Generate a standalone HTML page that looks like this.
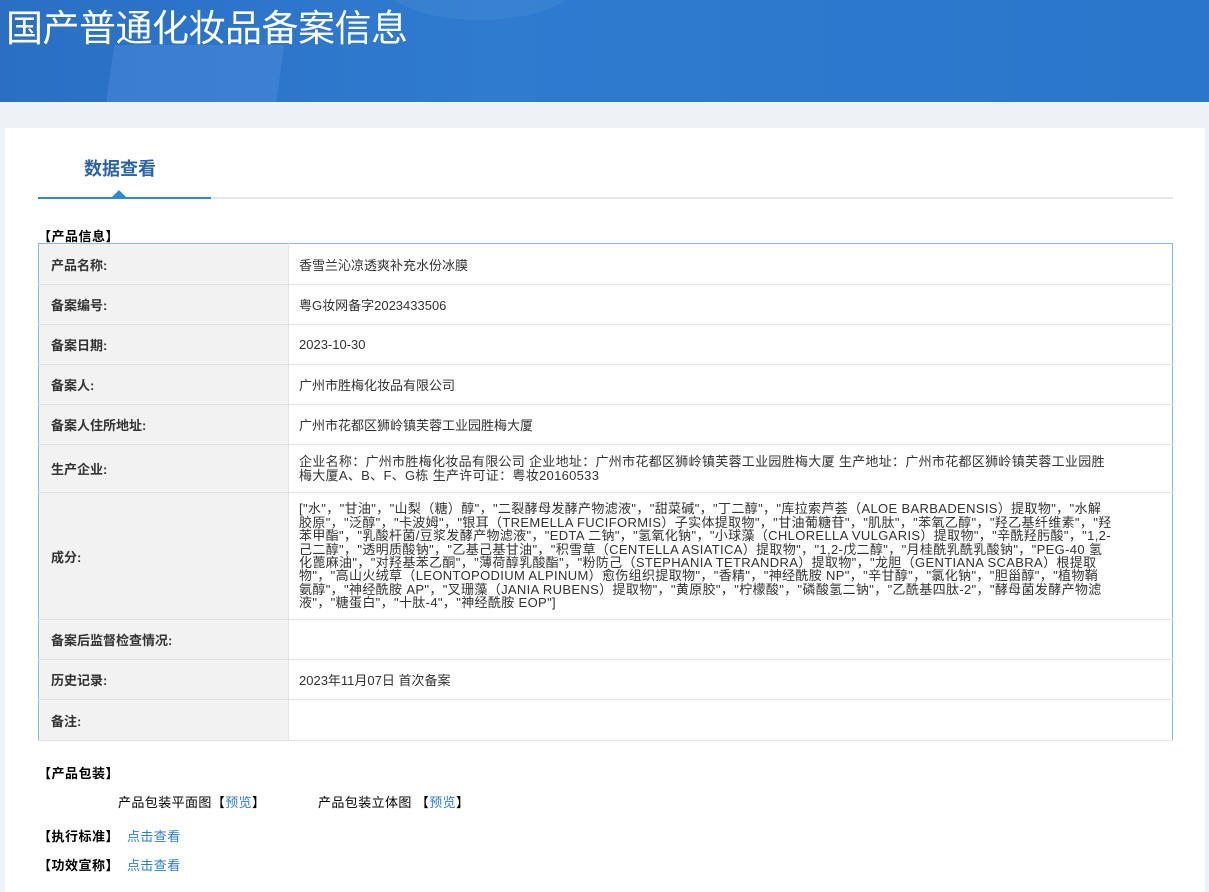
<!DOCTYPE html>
<html><head><meta charset="utf-8"><style>
*{margin:0;padding:0;box-sizing:border-box}
body{width:1209px;height:892px;overflow:hidden;background:#eef2f6;font-family:"Liberation Sans","Noto Sans CJK SC",sans-serif;color:#333;position:relative}
.hd{position:absolute;left:0;top:0;width:1209px;height:102px;background:linear-gradient(90deg,#2a6fc4 0%,#2f7bd0 40%,#2a76cc 100%);overflow:hidden}
.hd .s1{position:absolute;left:110px;top:45px;width:170px;height:60px;background:rgba(90,150,230,.35);transform:skewX(-8deg)}
.hd .s2{position:absolute;left:380px;top:-60px;width:200px;height:80px;border-radius:50%;background:rgba(255,255,255,.05)}
.hd h1{position:absolute;left:6px;top:4px;font-size:37px;font-weight:normal;color:#fff;letter-spacing:-0.5px;line-height:50px}
.card{position:absolute;left:5px;top:128px;width:1200px;height:764px;background:#fff}
.tab{position:absolute;left:84px;top:155px;font-size:18px;font-weight:bold;color:#2b63a9}
.ul{position:absolute;left:38px;top:197px;width:1135px;height:2px;background:#e6e6e6}
.ul b{position:absolute;left:0;top:0;width:173px;height:2px;background:#2d8ad8}
.tri{position:absolute;left:112px;top:190px;width:0;height:0;border-left:7px solid transparent;border-right:7px solid transparent;border-bottom:7px solid #2d8ad8}
.sec{position:absolute;font-size:13px;font-weight:bold;color:#000;letter-spacing:0.5px}
table{position:absolute;left:38px;top:243px;width:1135px;border-collapse:collapse;border:1px solid #8fb6e6;font-size:13px}
td{border-bottom:1px solid #e3e3e3;vertical-align:middle}
td.l{width:250px;background:#f2f2f2;font-weight:bold;padding-left:12px;color:#333;border-right:1px solid #e3e3e3}
td.v{padding-left:10px;padding-right:10px;color:#333}
.ing{line-height:13.4px;font-size:13px;white-space:nowrap;letter-spacing:0.35px}
a{color:#2e7dd3;text-decoration:none}
.t{position:absolute;font-size:13px;color:#000;letter-spacing:0.4px}
</style></head><body>
<div class="hd"><div class="s1"></div><div class="s2"></div><h1>国产普通化妆品备案信息</h1></div>
<div class="card"></div>
<div class="tab">数据查看</div>
<div class="ul"><b></b></div>
<div class="tri"></div>
<div class="sec" style="left:38px;top:226px">【产品信息】</div>
<table>
<tr style="height:41px"><td class="l">产品名称:</td><td class="v">香雪兰沁凉透爽补充水份冰膜</td></tr>
<tr style="height:40px"><td class="l">备案编号:</td><td class="v">粤G妆网备字2023433506</td></tr>
<tr style="height:40px"><td class="l">备案日期:</td><td class="v">2023-10-30</td></tr>
<tr style="height:40px"><td class="l">备案人:</td><td class="v">广州市胜梅化妆品有限公司</td></tr>
<tr style="height:40px"><td class="l">备案人住所地址:</td><td class="v">广州市花都区狮岭镇芙蓉工业园胜梅大厦</td></tr>
<tr style="height:48px"><td class="l">生产企业:</td><td class="v" style="line-height:14px;letter-spacing:0.3px">企业名称：广州市胜梅化妆品有限公司 企业地址：广州市花都区狮岭镇芙蓉工业园胜梅大厦 生产地址：广州市花都区狮岭镇芙蓉工业园胜<br>梅大厦A、B、F、G栋 生产许可证：粤妆20160533</td></tr>
<tr style="height:127px"><td class="l">成分:</td><td class="v ing">["水"，"甘油"，"山梨（糖）醇"，"二裂酵母发酵产物滤液"，"甜菜碱"，"丁二醇"，"库拉索芦荟（ALOE BARBADENSIS）提取物"，"水解<br>胶原"，"泛醇"，"卡波姆"，"银耳（TREMELLA FUCIFORMIS）子实体提取物"，"甘油葡糖苷"，"肌肽"，"苯氧乙醇"，"羟乙基纤维素"，"羟<br>苯甲酯"，"乳酸杆菌/豆浆发酵产物滤液"，"EDTA 二钠"，"氢氧化钠"，"小球藻（CHLORELLA VULGARIS）提取物"，"辛酰羟肟酸"，"1,2-<br>己二醇"，"透明质酸钠"，"乙基己基甘油"，"积雪草（CENTELLA ASIATICA）提取物"，"1,2-戊二醇"，"月桂酰乳酰乳酸钠"，"PEG-40 氢<br>化蓖麻油"，"对羟基苯乙酮"，"薄荷醇乳酸酯"，"粉防己（STEPHANIA TETRANDRA）提取物"，"龙胆（GENTIANA SCABRA）根提取<br>物"，"高山火绒草（LEONTOPODIUM ALPINUM）愈伤组织提取物"，"香精"，"神经酰胺 NP"，"辛甘醇"，"氯化钠"，"胆甾醇"，"植物鞘<br>氨醇"，"神经酰胺 AP"，"叉珊藻（JANIA RUBENS）提取物"，"黄原胶"，"柠檬酸"，"磷酸氢二钠"，"乙酰基四肽-2"，"酵母菌发酵产物滤<br>液"，"糖蛋白"，"十肽-4"，"神经酰胺 EOP"]</td></tr>
<tr style="height:40px"><td class="l">备案后监督检查情况:</td><td class="v"></td></tr>
<tr style="height:40px"><td class="l">历史记录:</td><td class="v">2023年11月07日 首次备案</td></tr>
<tr style="height:41px"><td class="l">备注:</td><td class="v"></td></tr>
</table>
<div class="sec" style="left:38px;top:763px">【产品包装】</div>
<div class="t" style="left:118px;top:792px">产品包装平面图【<a>预览</a>】</div>
<div class="t" style="left:318px;top:792px">产品包装立体图 【<a>预览</a>】</div>
<div class="sec" style="left:38px;top:826px">【执行标准】</div>
<div class="t" style="left:127px;top:826px"><a>点击查看</a></div>
<div class="sec" style="left:38px;top:855px">【功效宣称】</div>
<div class="t" style="left:127px;top:855px"><a>点击查看</a></div>
</body></html>
